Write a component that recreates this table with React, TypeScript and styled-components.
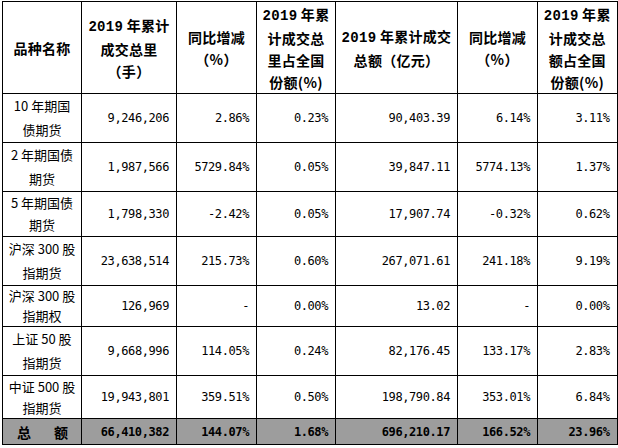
import React from "react";
import styled, { createGlobalStyle } from "styled-components";

const Global = createGlobalStyle`
  html, body { margin: 0; padding: 0; background: #ffffff; }
  body { font-family: "Noto Sans CJK SC", sans-serif; color: #000; line-height: 1; }
`;

const Page = styled.div`
  padding: 1px 0 0 2px;
`;

const Table = styled.table`
  border-collapse: collapse;
  table-layout: fixed;
  width: 615px;
  border-left: 1px solid #000;
  border-top: 1px solid #000;
  border-bottom: 1px solid #000;
  border-right: 2px solid #000;
`;

const Row = styled.tr<{ $h: number; $total?: boolean }>`
  height: ${(p) => p.$h}px;
  background: ${(p) => (p.$total ? "#9d9d9d" : "#ffffff")};
`;

const Cell = styled.td`
  border: 1px solid #000;
  padding: 0;
  vertical-align: middle;
  overflow: hidden;
  white-space: nowrap;
  line-height: 16px;
`;

const HeadCell = styled(Cell)`
  font-family: "Noto Sans CJK SC", sans-serif;
  font-weight: 700;
  font-size: 14px;
  line-height: 22px;
  text-align: center;
  letter-spacing: 0.3px;
`;

const HeadNum = styled.span`
  font-family: "Liberation Mono", "DejaVu Sans Mono", monospace;
  font-weight: 700;
  font-size: 14px;
`;

const NameCell = styled(Cell)<{ $lh: number }>`
  font-family: "Noto Sans CJK SC", sans-serif;
  font-size: 13px;
  line-height: ${(p) => p.$lh}px;
  text-align: center;
`;

const NumCell = styled(Cell)<{ $bold?: boolean }>`
  font-family: "DejaVu Sans Mono", "Liberation Mono", monospace;
  font-size: 12px;
  letter-spacing: -0.4px;
  font-weight: ${(p) => (p.$bold ? 700 : 400)};
  text-align: right;
  padding-right: 7px;
`;

const TotalName = styled(Cell)`
  font-family: "Noto Sans CJK SC", sans-serif;
  font-weight: 700;
  font-size: 14px;
`;

const Spread = styled.div`
  display: flex;
  justify-content: space-between;
  padding: 0 13px 0 14px;
`;

const widths = [79, 95, 80, 79, 122, 80, 80];

type DataRow = { name: [string, string]; h: number; v: string[] };

const rows: DataRow[] = [
  { name: ["10 年期国", "债期货"], h: 48, v: ["9,246,206", "2.86%", "0.23%", "90,403.39", "6.14%", "3.11%"] },
  { name: ["2 年期国债", "期货"], h: 48, v: ["1,987,566", "5729.84%", "0.05%", "39,847.11", "5774.13%", "1.37%"] },
  { name: ["5 年期国债", "期货"], h: 44, v: ["1,798,330", "-2.42%", "0.05%", "17,907.74", "-0.32%", "0.62%"] },
  { name: ["沪深 300 股", "指期货"], h: 49, v: ["23,638,514", "215.73%", "0.60%", "267,071.61", "241.18%", "9.19%"] },
  { name: ["沪深 300 股", "指期权"], h: 40, v: ["126,969", "-", "0.00%", "13.02", "-", "0.00%"] },
  { name: ["上证 50 股", "指期货"], h: 48, v: ["9,668,996", "114.05%", "0.24%", "82,176.45", "133.17%", "2.83%"] },
  { name: ["中证 500 股", "指期货"], h: 42, v: ["19,943,801", "359.51%", "0.50%", "198,790.84", "353.01%", "6.84%"] },
];

const totals = ["66,410,382", "144.07%", "1.68%", "696,210.17", "166.52%", "23.96%"];

export default function App() {
  return (
    <Page>
      <Global />
      <Table>
        <colgroup>
          {widths.map((w, i) => (
            <col key={i} style={{ width: w }} />
          ))}
        </colgroup>
        <tbody>
          <Row $h={92}>
            <HeadCell>品种名称</HeadCell>
            <HeadCell>
              <HeadNum>2019</HeadNum> 年累计
              <br />
              成交总里
              <br />
              （手）
            </HeadCell>
            <HeadCell>
              同比增减
              <br />
              （%）
            </HeadCell>
            <HeadCell>
              <HeadNum>2019</HeadNum> 年累
              <br />
              计成交总
              <br />
              里占全国
              <br />
              份额(%)
            </HeadCell>
            <HeadCell>
              <HeadNum>2019</HeadNum> 年累计成交
              <br />
              总额（亿元）
            </HeadCell>
            <HeadCell>
              同比增减
              <br />
              （%）
            </HeadCell>
            <HeadCell>
              <HeadNum>2019</HeadNum> 年累
              <br />
              计成交总
              <br />
              额占全国
              <br />
              份额(%)
            </HeadCell>
          </Row>
          {rows.map((r, i) => (
            <Row key={i} $h={r.h}>
              <NameCell $lh={Math.min(24, Math.floor(r.h / 2))}>
                {r.name[0]}
                <br />
                {r.name[1]}
              </NameCell>
              {r.v.map((v, j) => (
                <NumCell key={j}>{v}</NumCell>
              ))}
            </Row>
          ))}
          <Row $h={26} $total>
            <TotalName>
              <Spread>
                <span>总</span>
                <span>额</span>
              </Spread>
            </TotalName>
            {totals.map((v, j) => (
              <NumCell key={j} $bold>
                {v}
              </NumCell>
            ))}
          </Row>
        </tbody>
      </Table>
    </Page>
  );
}
